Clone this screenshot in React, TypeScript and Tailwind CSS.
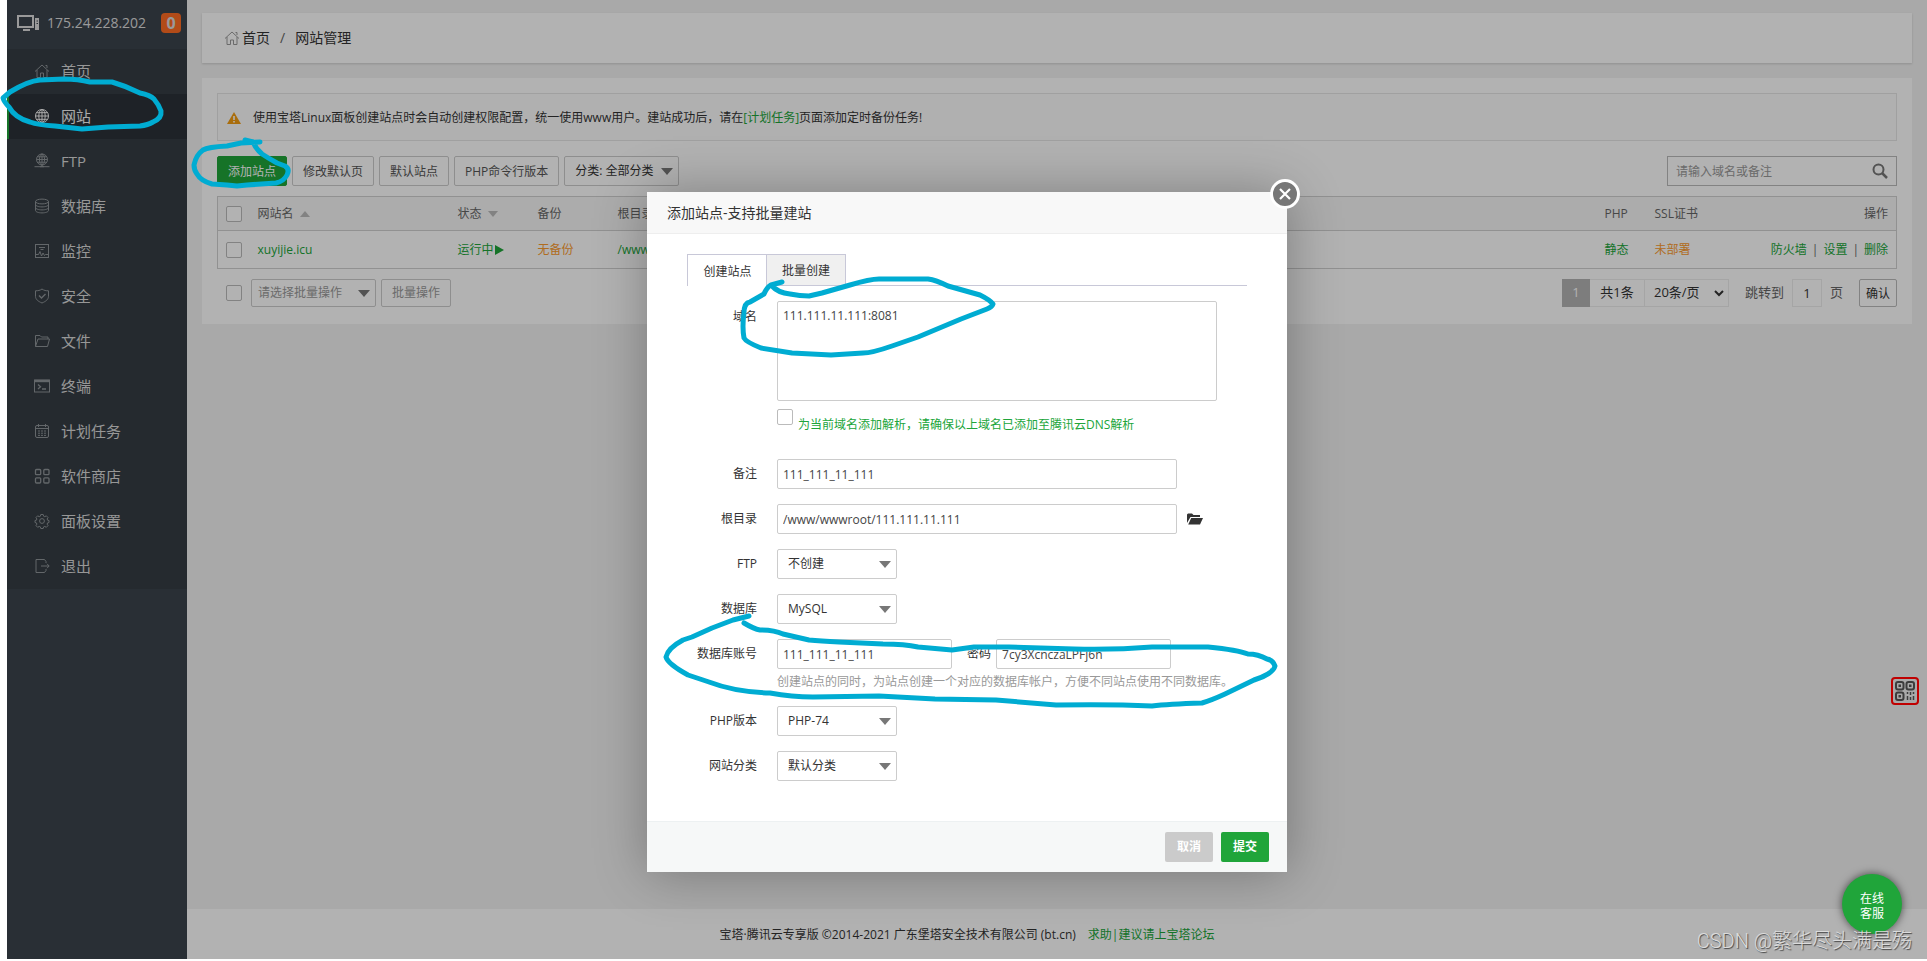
import React from 'react';

interface MenuItem {
  title: string;
  icon: React.ReactNode;
}

const menu: MenuItem[] = [
  { title: '首页', icon: <HomeShape /> },
  {
    title: '网站',
    icon: (
      <>
        <circle cx="8" cy="8" r="6.5" />
        <ellipse cx="8" cy="8" rx="3.2" ry="6.5" />
        <path d="M8 1.5v13M1.5 8h13M2.5 4.7h11M2.5 11.3h11" />
      </>
    )
  },
  {
    title: 'FTP',
    icon: (
      <>
        <circle cx="8" cy="6.5" r="5.5" />
        <ellipse cx="8" cy="6.5" rx="2.6" ry="5.5" />
        <path d="M8 1v13M2.5 6.5h11M3.3 3.8h9.4M3.3 9.2h9.4M.5 13.7h15M6 13.7h4" />
      </>
    )
  },
  {
    title: '数据库',
    icon: (
      <>
        <ellipse cx="8" cy="3.5" rx="6.5" ry="2.4" />
        <path d="M1.5 3.5v9c0 1.4 3 2.4 6.5 2.4s6.5-1 6.5-2.4v-9M1.5 6.5c0 1.4 3 2.4 6.5 2.4s6.5-1 6.5-2.4M1.5 9.5c0 1.4 3 2.4 6.5 2.4s6.5-1 6.5-2.4" />
      </>
    )
  },
  {
    title: '监控',
    icon: (
      <>
        <rect x="1.5" y="1.5" width="13" height="13" />
        <path d="M5 4.5h6M6.5 6.5h3M2 11.5h2.5L6 8.5l1.5 4.5L9 10l1.5 2.5 1-1H14" />
      </>
    )
  },
  {
    title: '安全',
    icon: (
      <>
        <path d="M8 1c2 1.5 4 1.8 6.5 1.8v5.500c0 3-2.5 5-6.5 6.7-4-1.7-6.5-3.7-6.5-6.7V2.8C4 2.8 6 2.5 8 1z" />
        <path d="M5 7.5l2.5 2.5L11.5 6" strokeWidth="1.4" />
      </>
    )
  },
  {
    title: '文件',
    icon: <path d="M1.5 13.5v-11H6l1.5 1.5h6.5v2M1.5 13.500L4 6h11.5l-2 7.5z" />
  },
  {
    title: '终端',
    icon: (
      <>
        <rect x=".5" y="2" width="15" height="12" />
        <path d="M.5 3h15" strokeWidth="2.4" />
        <path d="M4 6.5L6.5 8.8 4 11M8 11h4" strokeWidth="1.3" />
      </>
    )
  },
  {
    title: '计划任务',
    icon: (
      <>
        <rect x="1.5" y="2.5" width="13" height="12" rx="1.5" />
        <path d="M1.5 5.5h13M4.5 1v3M11.5 1v3" />
        <path d="M4 8h8M4 10.2h8M4 12.4h8" strokeDasharray="2 1" />
      </>
    )
  },
  {
    title: '软件商店',
    icon: (
      <g strokeWidth="1.3">
        <rect x="1.5" y="1.5" width="5.2" height="5.2" rx="1" />
        <rect x="9.8" y="1.5" width="5.2" height="5.2" rx="1" />
        <rect x="1.5" y="9.8" width="5.2" height="5.2" rx="1" />
        <rect x="9.8" y="9.8" width="5.2" height="5.2" rx="1" />
      </g>
    )
  },
  {
    title: '面板设置',
    icon: (
      <>
        <circle cx="8" cy="8" r="2.4" />
        <path d="M6.8 1.5h2.4l.4 1.7 1.2.5 1.5-.9 1.7 1.7-.9 1.5.5 1.2 1.4.3v2l-1.4.4-.5 1.2.9 1.5-1.7 1.700-1.5-.9-1.2.5-.4 1.600H6.8l-.4-1.6-1.2-.5-1.5.9L2 12.6l.9-1.5-.5-1.2-1.400-.4v-2l1.400-.3.5-1.200L2 4.5l1.7-1.700 1.5.9 1.2-.5z" />
      </>
    )
  },
  {
    title: '退出',
    icon: <path d="M12 5V3.5L10.5 1.5H2v13h8.5L12 12.5V11M7 8h8M13 5.8L15.2 8 13 10.2" />
  }
];

// hand drawn marker rings that lie over the page
const marks: string[] = [
  'M3 98 L10 92 Q28 81 40 80 L64 79 Q78 79 90 82 L112 82 Q126 86 140 93 Q150 95 154 99 Q159 105 161 111 Q162 118 153 122 Q148 125 140 126 L108 127 L82 129 L55 126 Q38 125 30 122 Q15 118 9 107 Q4 102 3 98 Z',
  'M245 140 L253 142 Q256 149 262 154 Q268 158 277 163 L285 166 Q290 169 287 175 Q284 181 276 183 L247 185 L237 186 L227 185 L212 184 Q201 181 197 174 Q194 170 194 165 Q196 155 203 150 Q208 147 227 146 L241 143 L260 142',
  'M782 282 L771 285 Q778 293 790 294 Q800 296 809 296 L822 293 L850 285 Q870 279 879 279 L928 279 Q936 280 948 286 L980 295 Q990 300 993 304 Q992 307 987 309 L961 319 L918 337 L892 346 Q872 353 863 353 L831 355 L792 353 L761 348 Q746 342 744 338 Q742 327 744 313 Q744 303 750 302 L764 294 Q767 287 771 285',
  'M749 616 L733 620 L712 628 L692 637 L683 640 Q668 648 666 657 Q668 664 688 675 L709 682 Q735 692 770 693 Q792 697 813 697 L879 696 L935 699 L996 700 L1056 705 Q1110 704 1152 706 Q1168 704 1202 703 Q1212 700 1225 694 L1254 680 Q1273 674 1275 666 Q1273 660 1267 659 Q1258 654 1248 654 Q1238 650 1208 647 L1152 647 Q1115 650 1074 649 L1009 647 L974 647 L952 650 L918 647 Q905 644 883 644 L839 642 Q820 641 809 640 L783 634 Q774 630 760 630 Q754 629 744 623'
];

function HomeShape() {
  return <path d="M1 8.5L8 2l7 6.5M3 7v7.5h3.5V10h3v4.5H13V7M11.5 2.5h1.5V5" />;
}

const LineIcon: React.FC<{ children: React.ReactNode; className?: string }> = ({ children, className }) => (
  <svg viewBox="0 0 16 16" fill="none" stroke="currentColor" strokeWidth="1" className={`size-4 shrink-0 ${className ?? ''}`}>
    {children}
  </svg>
);

const Caret: React.FC<{ className?: string; up?: boolean }> = ({ className, up }) => (
  <svg viewBox="0 0 12 7" className={`shrink-0 fill-current ${className ?? ''}`}>
    <path d={up ? 'M0 7L6 0l6 7z' : 'M0 0h12L6 7z'} />
  </svg>
);

const Check: React.FC<{ id?: string; label: string }> = ({ id, label }) => (
  <input
    id={id}
    type="checkbox"
    aria-label={label}
    className="block size-4 shrink-0 appearance-none rounded-xs border border-[#bbb] bg-white"
  />
);

interface SelectBoxProps {
  id?: string;
  label?: string;
  value: string;
  box: string;
}

const SelectBox: React.FC<SelectBoxProps> = ({ id, label, value, box }) => (
  <div className="relative flex w-fit items-center">
    <select id={id} aria-label={label} className={`appearance-none rounded-xs border bg-white ${box}`}>
      <option>{value}</option>
    </select>
    <Caret className="pointer-events-none absolute right-[6px] h-[7px] w-3 text-[#777]" />
  </div>
);

const Row: React.FC<{ id: string; label: string; children: React.ReactNode }> = ({ id, label, children }) => (
  <div className="mb-[15px] flex items-start">
    <label htmlFor={id} className="mr-5 w-[70px] shrink-0 text-right leading-[30px]">
      {label}
    </label>
    <div className="grow">{children}</div>
  </div>
);

const field = 'block h-[30px] rounded-xs border border-[#ccc] bg-white px-[5px] text-[#444]';
const formSelect = 'h-[30px] w-[120px] border-[#ccc] pl-[10px] pr-5 text-[#333]';
const toolButton = 'h-[30px] rounded-xs border border-[#ccc] bg-white px-[10px] pt-px text-[#555]';

const Sidebar: React.FC = () => (
  <aside className="w-[180px] shrink-0 bg-[#3c444d]">
    <div className="flex h-[49px] items-center pb-1 pl-[10px] pr-[6px] text-[#ddd]">
      <svg viewBox="0 0 23 16" className="mr-[7px] h-4 w-[23px]" fill="none" stroke="currentColor">
        <rect x="1" y="1" width="15" height="11" strokeWidth="2" />
        <path d="M6 15h7" strokeWidth="2" />
        <rect x="18.5" y="3.5" width="3" height="11" fill="currentColor" />
        <path d="M19.500 6h1.500M19.500 8.500h1.500" stroke="#3c444d" />
      </svg>
      <span className="grow text-sm">175.24.228.202</span>
      <span className="flex size-5 items-center justify-center rounded-[4px] bg-[#ff6c23] text-base font-bold">0</span>
    </div>
    <nav className="bg-[#353d44]">
      {menu.map((item, index) => (
        <a
          key={index}
          href="#"
          className={
            index === 1
              ? 'flex h-[45px] items-center border-l-2 border-[#20a53a] bg-[#2c3138] pb-[2px] pl-[25px] text-[15px] text-[#f4f4f4]'
              : 'flex h-[45px] items-center border-l-2 border-transparent pb-[2px] pl-[25px] text-[15px] text-[#d8d8d8]'
          }
        >
          <LineIcon className={index === 1 ? 'mr-[11px]' : 'mr-[11px] text-[#8f9498]'}>{item.icon}</LineIcon>
          {item.title}
        </a>
      ))}
    </nav>
  </aside>
);

const Toolbar: React.FC = () => (
  <div className="mt-[15px] flex gap-[5px]">
    <button className="h-[30px] rounded-xs border border-[#20a53a] bg-[#20a53a] px-[10px] pt-px text-white">添加站点</button>
    <button className={toolButton}>修改默认页</button>
    <button className={toolButton}>默认站点</button>
    <button className={toolButton}>PHP命令行版本</button>
    <SelectBox label="分类" value="分类: 全部分类" box="h-[30px] w-[115px] border-[#ccc] pl-[10px] pr-5 text-[#333]" />
    <div className="relative ml-auto flex items-center">
      <input
        aria-label="搜索"
        placeholder="请输入域名或备注"
        className="h-[30px] w-[230px] border border-[#bbb] bg-white pl-2 placeholder:text-[#999]"
      />
      <svg viewBox="0 0 16 16" fill="none" stroke="#777" strokeWidth="2" className="absolute right-[9px] size-4">
        <circle cx="6.500" cy="6.500" r="5" />
        <path d="M10 10l5 5" strokeWidth="2.500" />
      </svg>
    </div>
  </div>
);

const SiteTable: React.FC = () => (
  <table className="mt-[10px] w-full table-fixed border-collapse border border-[#ddd] text-left">
    <thead>
      <tr className="h-[34px] border border-[#d0d0d0] bg-[#f6f6f6] text-[#666]">
        <th className="w-8 pl-2"><Check label="全选" /></th>
        <th className="w-[200px] px-2 font-normal">
          <span className="flex items-center gap-[6px]">网站名 <Caret up className="h-[6px] w-[10px] text-[#bbb]" /></span>
        </th>
        <th className="w-20 px-2 font-normal">
          <span className="flex items-center gap-[6px]">状态 <Caret className="h-[6px] w-[10px] text-[#bbb]" /></span>
        </th>
        <th className="w-20 px-2 font-normal">备份</th>
        <th className="px-2 font-normal">根目录</th>
        <th className="w-[50px] px-2 font-normal">PHP</th>
        <th className="w-[100px] px-2 font-normal">SSL证书</th>
        <th className="w-[150px] px-2 text-right font-normal">操作</th>
      </tr>
    </thead>
    <tbody>
      <tr className="h-[38px] border border-[#d0d0d0] text-[#20a53a]">
        <td className="pl-2"><Check label="xuyijie.icu" /></td>
        <td className="px-2"><a href="#">xuyijie.icu</a></td>
        <td className="px-2">
          <a href="#" className="flex items-center">
            运行中
            <svg viewBox="0 0 9 10" className="ml-px h-[10px] w-[9px] fill-current"><path d="M0 0l9 5-9 5z" /></svg>
          </a>
        </td>
        <td className="px-2"><a href="#" className="text-[#fc9b2d]">无备份</a></td>
        <td className="px-2"><a href="#">/www/wwwroot/xuyijie.icu</a></td>
        <td className="px-2"><a href="#">静态</a></td>
        <td className="px-2"><a href="#" className="text-[#fc9b2d]">未部署</a></td>
        <td className="px-2">
          <span className="flex justify-end gap-[5px]">
            <a href="#">防火墙</a><span className="text-[#666]">|</span>
            <a href="#">设置</a><span className="text-[#666]">|</span>
            <a href="#">删除</a>
          </span>
        </td>
      </tr>
    </tbody>
  </table>
);

const TableFooter: React.FC = () => (
  <div className="mt-[10px] flex">
    <div className="flex items-center pl-[9px]">
      <div className="mr-[9px]"><Check label="批量选择" /></div>
      <SelectBox label="批量操作" value="请选择批量操作" box="h-7 w-[125px] border-[#ccc] pl-[6px] pr-5 text-[#999]" />
      <button className="ml-[5px] h-7 rounded-xs border border-[#ccc] px-[10px] text-[#999]">批量操作</button>
    </div>
    <div className="ml-auto flex text-[13px] text-[#333]">
      <span className="flex h-7 w-7 items-center justify-center bg-[#b4b4b4] text-white">1</span>
      <span className="flex h-7 w-[55px] items-center justify-center border border-l-0 border-[#ececec]">共1条</span>
      <div className="relative flex items-center">
        <select aria-label="每页条数" className="h-7 w-[84px] appearance-none border border-l-0 border-[#ececec] bg-white pl-[9px]">
          <option>20条/页</option>
        </select>
        <svg viewBox="0 0 10 7" fill="none" stroke="#333" strokeWidth="2" className="pointer-events-none absolute right-[5px] h-[7px] w-[10px]">
          <path d="M1 1l4 4 4-4" />
        </svg>
      </div>
      <label htmlFor="page" className="ml-4 mr-2 leading-[26px] text-[#666]">跳转到</label>
      <input id="page" defaultValue="1" className="h-7 w-[30px] border border-[#ececec] bg-white text-center" />
      <span className="ml-2 mr-4 leading-[26px] text-[#666]">页</span>
      <button className="h-7 w-[38px] rounded-xs border border-[#bbb] pt-[2px] text-xs">确认</button>
    </div>
  </div>
);

const AddSiteDialog: React.FC = () => (
  <div role="dialog" aria-label="添加站点" className="relative w-[640px] bg-white text-[#333] shadow-[1px_1px_50px_rgba(0,0,0,0.3)]">
    <h2 className="h-[42px] border-b border-[#eee] bg-[#f8f8f8] pl-5 text-sm leading-[42px]">添加站点-支持批量建站</h2>
    <button
      aria-label="关闭"
      className="absolute -right-[13px] -top-[13px] flex size-[30px] items-center justify-center rounded-full border-3 border-white bg-[#777]"
    >
      <svg viewBox="0 0 12 12" stroke="#fff" strokeWidth="2.2" className="size-3">
        <path d="M1 1l10 10M11 1L1 11" />
      </svg>
    </button>

    <form className="px-10 pb-[10px] pt-5">
      <div className="mb-[15px] flex h-8 border-b border-[#c8c8d8]">
        <button type="button" className="h-8 w-20 border-l border-t border-[#c8c8d8] bg-white pt-[2px]">创建站点</button>
        <button type="button" className="-ml-px h-8 w-20 border border-[#c8c8d8] bg-[#f0f0f0] pt-[2px]">批量创建</button>
      </div>

      <div className="mb-[26px] flex items-start">
        <label htmlFor="domain" className="mr-5 w-[70px] shrink-0 text-right leading-8">域名</label>
        <div>
          <textarea
            id="domain"
            defaultValue="111.111.11.111:8081"
            className="block h-[100px] w-[440px] resize-none rounded-xs border border-[#ccc] px-[5px] py-1 leading-5 text-[#444]"
          />
          <div className="mt-2 flex gap-[5px]">
            <Check id="dns" label="添加解析" />
            <label htmlFor="dns" className="mt-2 leading-4 text-[#20a53a]">
              为当前域名添加解析，请确保以上域名已添加至腾讯云DNS解析
            </label>
          </div>
        </div>
      </div>

      <Row id="remark" label="备注">
        <input id="remark" defaultValue="111_111_11_111" className={`${field} w-[400px]`} />
      </Row>
      <Row id="root-dir" label="根目录">
        <div className="flex items-center">
          <input id="root-dir" defaultValue="/www/wwwroot/111.111.11.111" className={`${field} w-[400px]`} />
          <button type="button" aria-label="选择目录" className="ml-[10px]">
            <svg viewBox="0 0 16 12" className="h-3 w-4 fill-[#333]">
              <path d="M0 10V1.500L1 .5h4l1.500 1.500H13V4H3.500z" />
              <path d="M4.200 5H16l-3 6.500H1.200z" />
            </svg>
          </button>
        </div>
      </Row>
      <Row id="ftp" label="FTP">
        <SelectBox id="ftp" value="不创建" box={formSelect} />
      </Row>
      <Row id="database" label="数据库">
        <SelectBox id="database" value="MySQL" box={formSelect} />
      </Row>
      <Row id="db-user" label="数据库账号">
        <div className="flex items-center">
          <input id="db-user" defaultValue="111_111_11_111" className={`${field} w-[175px]`} />
          <label htmlFor="db-password" className="ml-[15px] mr-[5px]">密码</label>
          <input id="db-password" defaultValue="7cy3XcnczaLPFj6n" className={`${field} w-[175px]`} />
        </div>
        <p className="mt-1 leading-[18px] text-[#999]">创建站点的同时，为站点创建一个对应的数据库帐户，方便不同站点使用不同数据库。</p>
      </Row>
      <Row id="php" label="PHP版本">
        <SelectBox id="php" value="PHP-74" box={formSelect} />
      </Row>
      <Row id="category" label="网站分类">
        <SelectBox id="category" value="默认分类" box={formSelect} />
      </Row>
      <div className="h-[15px]" />
    </form>

    <div className="flex justify-end gap-2 border-t border-[#edf1f2] bg-[#f6f8f8] px-[18px] py-[10px] font-bold text-white">
      <button className="h-[30px] w-12 rounded-xs bg-[#cbcbcb]">取消</button>
      <button className="h-[30px] w-12 rounded-xs bg-[#20a53a]">提交</button>
    </div>
  </div>
);

export default function App() {
  return (
    <div className="relative h-screen overflow-hidden bg-white pb-[2px] pl-[7px] font-['Open_Sans','Noto_Sans_CJK_SC',sans-serif] text-xs text-[#333]">
      <div className="relative flex h-full bg-[#f2f2f2]">
        <Sidebar />
        <div className="flex min-w-0 grow flex-col">
          <main className="grow px-[15px] pt-[13px]">
            <div className="flex h-[50px] items-center bg-white pl-[22px] text-sm shadow-[0_1px_2px_rgba(0,0,0,0.15)]">
              <LineIcon className="mr-[2px] text-[#999]"><HomeShape /></LineIcon>
              <a href="#">首页</a>
              <span className="mx-[10px] text-[#666]">/</span>
              <span>网站管理</span>
            </div>
            <section className="mt-[15px] bg-white px-[15px] pb-[17px] pt-[15px]">
              <div className="flex h-12 items-center border border-[#e6e6e6] bg-[#fcfcfc] pl-[9px] pt-px">
                <svg viewBox="0 0 14 12" className="mr-3 h-3 w-[14px]">
                  <path d="M7 0l7 12H0z" fill="#f39c12" />
                  <path d="M7 4v4M7 9v1.500" stroke="#fff" strokeWidth="1.600" />
                </svg>
                <p>
                  使用宝塔Linux面板创建站点时会自动创建权限配置，统一使用www用户。建站成功后，请在
                  <a href="#" className="text-[#20a53a]">[计划任务]</a>页面添加定时备份任务!
                </p>
              </div>
              <Toolbar />
              <SiteTable />
              <TableFooter />
            </section>
          </main>
          <footer className="flex h-[50px] items-center justify-center gap-[12px] bg-white pr-[180px] pt-[2px]">
            <span>宝塔·腾讯云专享版 ©2014-2021 广东堡塔安全技术有限公司 (bt.cn)</span>
            <a href="#" className="text-[#20a53a]">求助|建议请上宝塔论坛</a>
          </footer>
        </div>

        <div className="absolute inset-0 flex items-start justify-center bg-black/30 pt-[192px]">
          <AddSiteDialog />
        </div>

        <button aria-label="二维码" className="absolute right-2 top-[677px] flex size-7 items-center justify-center rounded-[4px] border-2 border-[#c00000]">
          <svg viewBox="0 0 20 20" fill="none" stroke="#3c3c3c" strokeWidth="2" className="size-5">
            <rect x="1" y="1" width="7.5" height="7.5" rx="2" />
            <rect x="11.5" y="1" width="7.5" height="7.5" rx="2" />
            <rect x="1" y="11.5" width="7.5" height="7.5" rx="2" />
            <path d="M3.500 4.750h2.500M14 4.750h2.500M3.500 15.250h2.500" strokeWidth="2.500" />
            <path d="M12.500 11v2M15.500 11v3M18.500 11v2M12.500 15v4M15.500 16v3M18.500 15v4" strokeWidth="1.500" />
          </svg>
        </button>
        <button className="absolute bottom-[25px] right-[25px] size-[60px] rounded-full bg-[#20a53a] px-4 pt-1 leading-[15px] text-white shadow-[0_0_8px_rgba(0,0,0,0.6)]">
          在线客服
        </button>
        <p className="absolute bottom-[6px] right-[15px] font-['Roboto','Noto_Sans_CJK_SC',sans-serif] text-xl leading-6 font-light text-[#dcdcdc] [text-shadow:1px_1px_1px_#444]">
          CSDN @繁华尽头满是殇
        </p>
      </div>

      <svg viewBox="0 0 1927 961" className="pointer-events-none absolute inset-0 size-full" fill="none" stroke="#00acd2" strokeWidth="5" strokeLinecap="round" strokeLinejoin="round">
        {marks.map((d, index) => (
          <path key={index} d={d} />
        ))}
      </svg>
    </div>
  );
}
